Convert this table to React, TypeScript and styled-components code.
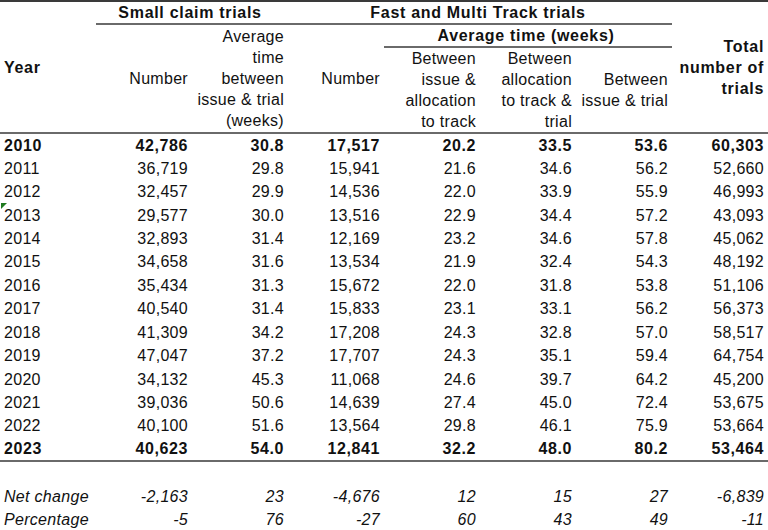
import styled, { createGlobalStyle } from 'styled-components';

const GlobalStyle = createGlobalStyle`
  body {
    margin: 0;
    background: #ffffff;
    font-family: 'Liberation Sans', Arial, sans-serif;
    color: #111111;
  }
`;

const Table = styled.table`
  width: 768px;
  border-collapse: collapse;
  table-layout: fixed;
  font-size: 16px;
  letter-spacing: 0.3px;
  white-space: nowrap;
  border-top: 2px solid #3a3a3a;
  border-bottom: 2px solid #6a6a6a;
`;

const Head = styled.thead`
  border-bottom: 2px solid #6a6a6a;
`;

const HeadRow = styled.tr<{ $h: number }>`
  height: ${(p) => p.$h}px;
`;

const HeadCell = styled.th<{ $align?: 'left' | 'center' | 'right'; $bold?: boolean; $line?: boolean }>`
  text-align: ${(p) => p.$align || 'right'};
  font-weight: ${(p) => (p.$bold ? 700 : 400)};
  letter-spacing: ${(p) => (p.$bold ? '0.7px' : '0.3px')};
  vertical-align: middle;
  line-height: 21px;
  padding: 0 4px 0 0;
  border-bottom: ${(p) => (p.$line ? '2px solid #6a6a6a' : 'none')};
`;

const YearHead = styled(HeadCell)`
  padding-left: 4px;
`;

const Row = styled.tr<{ $bold?: boolean; $italic?: boolean; $rule?: boolean }>`
  height: 23.45px;
  line-height: 19px;
  font-weight: ${(p) => (p.$bold ? 700 : 400)};
  letter-spacing: ${(p) => (p.$bold ? '0.6px' : '0.3px')};
  font-style: ${(p) => (p.$italic ? 'italic' : 'normal')};
  border-bottom: ${(p) => (p.$rule ? '2px solid #6a6a6a' : 'none')};
`;

const YearCell = styled.td`
  position: relative;
  text-align: left;
  padding: 0 0 0 4px;
`;

const Cell = styled.td`
  text-align: right;
  padding: 0 4px 0 0;
`;

const Flag = styled.span`
  position: absolute;
  left: 1px;
  top: 0;
  width: 0;
  height: 0;
  border-top: 6px solid #1f7a1f;
  border-right: 6px solid transparent;
`;

const Spacer = styled.tr`
  height: 23.5px;
`;

const rows: [string, string, string, string, string, string, string, string][] = [
  ['2010', '42,786', '30.8', '17,517', '20.2', '33.5', '53.6', '60,303'],
  ['2011', '36,719', '29.8', '15,941', '21.6', '34.6', '56.2', '52,660'],
  ['2012', '32,457', '29.9', '14,536', '22.0', '33.9', '55.9', '46,993'],
  ['2013', '29,577', '30.0', '13,516', '22.9', '34.4', '57.2', '43,093'],
  ['2014', '32,893', '31.4', '12,169', '23.2', '34.6', '57.8', '45,062'],
  ['2015', '34,658', '31.6', '13,534', '21.9', '32.4', '54.3', '48,192'],
  ['2016', '35,434', '31.3', '15,672', '22.0', '31.8', '53.8', '51,106'],
  ['2017', '40,540', '31.4', '15,833', '23.1', '33.1', '56.2', '56,373'],
  ['2018', '41,309', '34.2', '17,208', '24.3', '32.8', '57.0', '58,517'],
  ['2019', '47,047', '37.2', '17,707', '24.3', '35.1', '59.4', '64,754'],
  ['2020', '34,132', '45.3', '11,068', '24.6', '39.7', '64.2', '45,200'],
  ['2021', '39,036', '50.6', '14,639', '27.4', '45.0', '72.4', '53,675'],
  ['2022', '40,100', '51.6', '13,564', '29.8', '46.1', '75.9', '53,664'],
  ['2023', '40,623', '54.0', '12,841', '32.2', '48.0', '80.2', '53,464'],
];

const changes = [
  ['Net change', '-2,163', '23', '-4,676', '12', '15', '27', '-6,839'],
  ['Percentage', '-5', '76', '-27', '60', '43', '49', '-11'],
];

export default function App() {
  return (
    <>
      <GlobalStyle />
      <Table>
        <colgroup>
          {Array.from({ length: 8 }).map((_, i) => (
            <col key={i} style={{ width: 96 }} />
          ))}
        </colgroup>
        <Head>
          <HeadRow $h={21}>
            <YearHead rowSpan={3} $align="left" $bold>
              Year
            </YearHead>
            <HeadCell colSpan={2} $align="center" $bold $line>
              Small claim trials
            </HeadCell>
            <HeadCell colSpan={4} $align="center" $bold $line>
              Fast and Multi Track trials
            </HeadCell>
            <HeadCell rowSpan={3} $bold>
              Total
              <br />
              number of
              <br />
              trials
            </HeadCell>
          </HeadRow>
          <HeadRow $h={20}>
            <HeadCell rowSpan={2}>Number</HeadCell>
            <HeadCell rowSpan={2}>
              Average
              <br />
              time
              <br />
              between
              <br />
              issue &amp; trial
              <br />
              (weeks)
            </HeadCell>
            <HeadCell rowSpan={2}>Number</HeadCell>
            <HeadCell colSpan={3} $align="center" $bold $line>
              Average time (weeks)
            </HeadCell>
          </HeadRow>
          <HeadRow $h={82}>
            <HeadCell>
              Between
              <br />
              issue &amp;
              <br />
              allocation
              <br />
              to track
            </HeadCell>
            <HeadCell>
              Between
              <br />
              allocation
              <br />
              to track &amp;
              <br />
              trial
            </HeadCell>
            <HeadCell>
              Between
              <br />
              issue &amp; trial
            </HeadCell>
          </HeadRow>
        </Head>
        <tbody>
          {rows.map((r, i) => (
            <Row key={r[0]} $bold={i === 0 || i === rows.length - 1} $rule={i === rows.length - 1}>
              <YearCell>
                {r[0] === '2013' && <Flag />}
                {r[0]}
              </YearCell>
              {r.slice(1).map((v, j) => (
                <Cell key={j}>{v}</Cell>
              ))}
            </Row>
          ))}
          <Spacer>
            <td colSpan={8} />
          </Spacer>
          {changes.map((r) => (
            <Row key={r[0]} $italic>
              <YearCell>{r[0]}</YearCell>
              {r.slice(1).map((v, j) => (
                <Cell key={j}>{v}</Cell>
              ))}
            </Row>
          ))}
        </tbody>
      </Table>
    </>
  );
}
